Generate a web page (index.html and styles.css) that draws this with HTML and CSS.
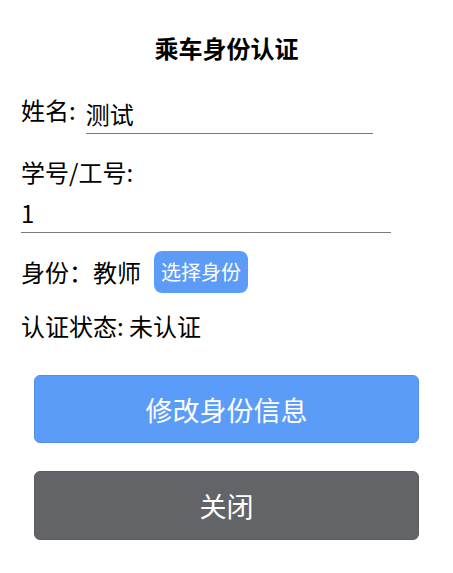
FILE: index.html
```html
<!DOCTYPE html>
<html lang="zh-CN">
<head>
<meta charset="utf-8">
<title>乘车身份认证</title>
<link rel="stylesheet" href="styles.css">
</head>
<body>
<div class="dialog">
  <h1 class="title">乘车身份认证</h1>
  <div class="field field-inline">
    <label class="label">姓名:</label>
    <input class="input input-short" type="text" value="测试">
  </div>
  <div class="field field-block">
    <label class="label">学号/工号:</label>
    <input class="input input-long" type="text" value="1">
  </div>
  <div class="field role-row">
    <span class="label">身份：</span>
    <span class="role-value">教师</span>
    <button class="btn-small" type="button">选择身份</button>
  </div>
  <div class="field status-row">认证状态: 未认证</div>
  <div class="actions">
    <button class="btn btn-primary" type="button">修改身份信息</button>
    <button class="btn btn-secondary" type="button">关闭</button>
  </div>
</div>
</body>
</html>
```
FILE: styles.css
```css
html, body {
  margin: 0;
  padding: 0;
  background: #ffffff;
}
body {
  font-family: "Noto Sans CJK SC", "Noto Sans", sans-serif;
  color: #000;
}
.dialog {
  padding: 32px 21px 0;
  display: flex;
  flex-direction: column;
}
.title {
  margin: 0;
  font-size: 24px;
  line-height: 32px;
  font-weight: bold;
  text-align: center;
}
.field {
  font-size: 24px;
  line-height: 32px;
}
.label {
  font-size: 24px;
  line-height: 32px;
}
.field-inline {
  margin-top: 30px;
  display: flex;
  align-items: flex-start;
}
.field-inline .label {
  margin-right: 10px;
}
.input {
  font-family: inherit;
  font-size: 24px;
  line-height: 32px;
  height: 32px;
  padding: 0 0 3px;
  margin: 0;
  border: none;
  border-bottom: 1px solid #7a7a7a;
  outline: none;
  background: transparent;
  color: #000;
  box-sizing: content-box;
}
.input-short {
  margin-top: 4px;
  width: 70%;
}
.field-block {
  margin-top: 22px;
  display: flex;
  flex-direction: column;
}
.input-long {
  margin-top: 9px;
  width: 90%;
}
.role-row {
  margin-top: 18px;
  display: flex;
  align-items: center;
}
.role-value {
  margin-left: 0;
}
.btn-small {
  margin-left: 13px;
  height: 42px;
  padding: 0 7px;
  border: none;
  border-radius: 8px;
  background: #5c9cf8;
  color: #fff;
  font-family: inherit;
  font-size: 20px;
  line-height: 42px;
}
.status-row {
  margin-top: 17px;
}
.actions {
  margin-top: 33px;
  display: flex;
  flex-direction: column;
  gap: 28px;
  padding: 0 13px;
}
.btn {
  height: 68px;
  border-radius: 6px;
  font-family: inherit;
  font-size: 27px;
  color: #fff;
  box-sizing: border-box;
}
.btn-secondary {
  height: 69px;
}
.btn-primary {
  background: #5b9cf8;
  border: 1px solid #4f8fe8;
}
.btn-secondary {
  background: #636468;
  border: 1px solid #5c5d61;
}
```
